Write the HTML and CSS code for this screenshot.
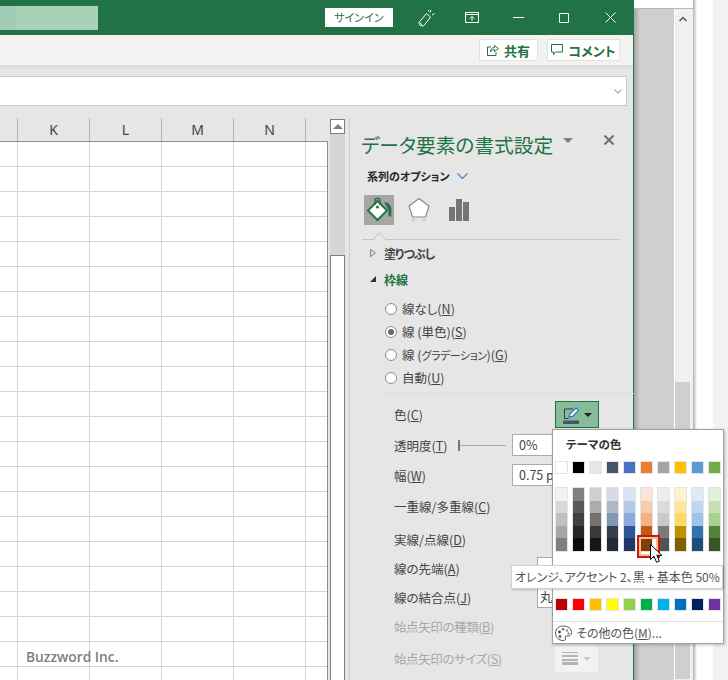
FILE: index.html
```html
<!DOCTYPE html>
<html lang="ja">
<head>
    <meta charset="UTF-8">
    <meta name="viewport" content="width=device-width, initial-scale=1.0">
    <title>データ要素の書式設定</title>
    <link rel="stylesheet" href="styles.css">
</head>
<body>
<div class="screen">
    <div class="excel">
        <div class="titlebar">
            <div class="search-box"></div>
            <button class="signin">サインイン</button>
            <div class="win-btn">
                <svg width="18" height="18" viewBox="0 0 18 18" fill="none" stroke="#fff" stroke-width="1"><path d="M2 13.500 9.500 4.500l4 3.500-6.500 8.500c-1 .8-2.500.5-4-.5-1-1-1.300-1.700-1-2.500zM5 16.500l-2-3M13 3.500l1-2.500M15 6l2.500-1.500M11.500 2.500l.5-1.500"/></svg>
            </div>
            <div class="win-btn">
                <svg width="14" height="11" viewBox="0 0 14 11" fill="none" stroke="#fff"><path d="M.5.5h13v10H.5zM.5 2.500h13M7 9V4.500M5 6.500l2-2 2 2"/></svg>
            </div>
            <div class="win-btn">
                <svg width="11" height="11" viewBox="0 0 11 11" stroke="#fff"><path d="M0 5.500h11"/></svg>
            </div>
            <div class="win-btn">
                <svg width="10" height="10" viewBox="0 0 10 10" fill="none" stroke="#fff"><path d="M.5.5h9v9h-9z"/></svg>
            </div>
            <div class="win-btn">
                <svg width="11" height="11" viewBox="0 0 11 11" stroke="#fff"><path d="M.5.5l10 10M10.500.5l-10 10"/></svg>
            </div>
        </div>

        <div class="toolbar">
            <button class="tool-btn share-btn">
                <svg width="12" height="12" viewBox="0 0 12 12" fill="none" stroke="#217346"><path d="M4 3H.5v8.500h8.500V8M3.500 8c0-3 1.500-4.500 4-4.500V1.500l4 3-4 3V5.500C6 5.500 4.500 6.200 3.500 8z"/></svg>
                共有
            </button>
            <button class="tool-btn comment-btn">
                <svg width="12" height="12" viewBox="0 0 12 12" fill="none" stroke="#217346"><path d="M.5.5h11v7.500H4.500l-2 2.500V8H.5z"/></svg>
                コメント
            </button>
        </div>

        <div class="formula">
            <div class="formula-input">
                <svg width="8" height="5" viewBox="0 0 8 5" fill="none" stroke="#b5b5b5" stroke-width="1.500"><path d="M.5.5 4 4 7.500.5"/></svg>
            </div>
        </div>

        <div class="workspace">
            <div class="sheet">
                <div class="col-heads">
                    <div class="col-head col-first"></div>
                    <div class="col-head">K</div>
                    <div class="col-head">L</div>
                    <div class="col-head">M</div>
                    <div class="col-head">N</div>
                    <div class="col-head col-last"></div>
                </div>
                <div class="cells">
                    <span class="watermark">Buzzword Inc.</span>
                </div>
            </div>

            <div class="vscroll">
                <div class="vscroll-up"><span class="tri-up"></span></div>
                <div class="vscroll-track"></div>
                <div class="vscroll-thumb"></div>
            </div>

            <div class="pane">
                <div class="pane-title">
                    <span class="pane-title-text">データ要素の書式設定</span>
                    <span class="tri-down pane-menu"></span>
                    <svg class="pane-close" width="10" height="10" viewBox="0 0 10 10" stroke="#707070" stroke-width="2"><path d="M.5.5l9 9M9.500.5l-9 9"/></svg>
                </div>
                <div class="series">
                    <span>系列のオプション</span>
                    <svg width="11" height="6" viewBox="0 0 11 6" fill="none" stroke="#3d8ad0" stroke-width="1.200"><path d="M.5.5l5 5 5-5"/></svg>
                </div>

                <div class="tabs">
                    <div class="tab tab-active">
                        <svg width="30" height="30" viewBox="0 0 30 30" fill="none">
                            <path d="M20 7c5 0 8 4 7.500 9l-.5 6-2.500-1V15z" fill="#217346"/>
                            <path d="M13.500 6 23 15.500 13.500 25 4 15.500z" fill="#fff" stroke="#217346" stroke-width="2"/>
                            <path d="M11 10V5c0-2.500 5-2.500 5 0v5" stroke="#217346" stroke-width="1.500"/>
                            <circle cx="13.500" cy="12" r="1.500" fill="#217346"/>
                        </svg>
                    </div>
                    <div class="tab">
                        <svg width="24" height="26" viewBox="0 0 24 26" fill="none">
                            <path d="M12 1.500 22 9l-3.500 11h-13L2 9z" fill="#fff" stroke="#8a8a8a" stroke-width="1.200"/>
                            <path d="M5 23h3M16 23h3" stroke="#b0b0b0"/>
                        </svg>
                    </div>
                    <div class="tab">
                        <svg width="20" height="22" viewBox="0 0 20 22" fill="#757575"><path d="M0 8h6v14H0zM7 0h6v22H7zM14 3h6v19h-6z"/></svg>
                    </div>
                </div>

                <div class="tab-rule"><span class="tab-notch"></span></div>

                <div class="section">
                    <span class="section-arrow tri-right"></span>
                    <span class="tight">塗りつぶし</span>
                </div>
                <div class="section section-open">
                    <span class="section-arrow tri-open"></span>
                    <span>枠線</span>
                </div>

                <div class="radios">
                    <div class="radio-row"><span class="radio"></span><span>線なし(<u>N</u>)</span></div>
                    <div class="radio-row"><span class="radio radio-on"></span><span>線 (単色)(<u>S</u>)</span></div>
                    <div class="radio-row"><span class="radio"></span><span>線 (<span class="kana-small">グラデーション</span>)(<u>G</u>)</span></div>
                    <div class="radio-row"><span class="radio"></span><span>自動(<u>U</u>)</span></div>
                </div>
                <div class="radios-rule"></div>

                <div class="fields">
                    <div class="field field-tall">
                        <label class="field-label">色(<u>C</u>)</label>
                        <button class="color-btn">
                            <svg width="18" height="18" viewBox="0 0 18 18" fill="none">
                                <path d="M10 3H1.500v9.500h4" stroke="#3a3a3a"/>
                                <path d="M6 11l1-3 6-6 2.500 2.500-6 6z" fill="#fff" stroke="#2b79c2" stroke-width="1.300"/>
                                <path d="M0 14.500h16V18H0z" fill="#44546a"/>
                            </svg>
                            <span class="tri-down tri-black"></span>
                        </button>
                    </div>
                    <div class="field">
                        <label class="field-label field-short">透明度(<u>T</u>)</label>
                        <div class="slider"></div>
                        <div class="text-box">0%</div>
                    </div>
                    <div class="field">
                        <label class="field-label">幅(<u>W</u>)</label>
                        <div class="text-box">0.75 pt</div>
                    </div>
                    <div class="field"><label class="field-label">一重線/多重線(<u>C</u>)</label></div>
                    <div class="field"><label class="field-label">実線/点線(<u>D</u>)</label></div>
                    <div class="field">
                        <label class="field-label field-wide">線の先端(<u>A</u>)</label>
                        <div class="text-box text-box-cap"></div>
                    </div>
                    <div class="field">
                        <label class="field-label field-wide">線の結合点(<u>J</u>)</label>
                        <div class="text-box text-box-cap">丸</div>
                    </div>
                    <div class="field field-off"><label class="field-label">始点矢印の種類(<u>B</u>)</label></div>
                    <div class="field field-off field-tall">
                        <label class="field-label field-mid">始点矢印のサイズ(<u>S</u>)</label>
                        <button class="arrow-btn">
                            <svg width="16" height="13" viewBox="0 0 16 13" fill="#b4b4b4"><path d="M0 0h16v1H0zM0 3h16v2H0zM0 7h16v2H0zM0 10h16v3H0z"/></svg>
                            <span class="tri-down tri-pale"></span>
                        </button>
                    </div>
                </div>
            </div>
        </div>
    </div>

    <div class="backdoc">
        <div class="backdoc-top"></div>
        <div class="backdoc-main">
            <div class="backdoc-gray"></div>
            <div class="backdoc-scroll">
                <svg class="backdoc-up" width="8" height="6" viewBox="0 0 8 6" fill="none" stroke="#555" stroke-width="1.500"><path d="M.5 5 4 1.500 7.500 5"/></svg>
                <div class="backdoc-thumb"></div>
            </div>
        </div>
    </div>
    <div class="backedge"></div>
    <div class="backrest"></div>

    <div class="color-menu">
        <div class="menu-head">テーマの色</div>
        <div class="swatches">
            <i class="swatch c-ffffff"></i><i class="swatch c-000000"></i><i class="swatch c-e7e6e6"></i><i class="swatch c-44546a"></i><i class="swatch c-4472c4"></i><i class="swatch c-ed7d31"></i><i class="swatch c-a5a5a5"></i><i class="swatch c-ffc000"></i><i class="swatch c-5b9bd5"></i><i class="swatch c-70ad47"></i>
        </div>
        <div class="swatches shades">
            <div class="shade"><i class="c-f2f2f2"></i><i class="c-d9d9d9"></i><i class="c-bfbfbf"></i><i class="c-a6a6a6"></i><i class="c-808080"></i></div>
            <div class="shade"><i class="c-808080"></i><i class="c-595959"></i><i class="c-404040"></i><i class="c-262626"></i><i class="c-0d0d0d"></i></div>
            <div class="shade"><i class="c-d0cece"></i><i class="c-afabab"></i><i class="c-767171"></i><i class="c-3b3838"></i><i class="c-181717"></i></div>
            <div class="shade"><i class="c-d6dce5"></i><i class="c-adb9ca"></i><i class="c-8497b0"></i><i class="c-333f50"></i><i class="c-222a35"></i></div>
            <div class="shade"><i class="c-dae3f3"></i><i class="c-b4c7e7"></i><i class="c-8faadc"></i><i class="c-2f5597"></i><i class="c-1f3864"></i></div>
            <div class="shade"><i class="c-fbe5d6"></i><i class="c-f8cbad"></i><i class="c-f4b183"></i><i class="c-c55a11"></i><i class="c-843c0c shade-picked"></i></div>
            <div class="shade"><i class="c-ededed"></i><i class="c-dbdbdb"></i><i class="c-c9c9c9"></i><i class="c-7b7b7b"></i><i class="c-525252"></i></div>
            <div class="shade"><i class="c-fff2cc"></i><i class="c-ffe699"></i><i class="c-ffd966"></i><i class="c-bf9000"></i><i class="c-7f6000"></i></div>
            <div class="shade"><i class="c-deebf7"></i><i class="c-bdd7ee"></i><i class="c-9dc3e6"></i><i class="c-2e75b6"></i><i class="c-1f4e79"></i></div>
            <div class="shade"><i class="c-e2f0d9"></i><i class="c-c5e0b4"></i><i class="c-a9d18e"></i><i class="c-548235"></i><i class="c-385723"></i></div>
        </div>
        <div class="swatches swatches-std">
            <i class="swatch c-c00000"></i><i class="swatch c-ff0000"></i><i class="swatch c-ffc000"></i><i class="swatch c-ffff00"></i><i class="swatch c-92d050"></i><i class="swatch c-00b050"></i><i class="swatch c-00b0f0"></i><i class="swatch c-0070c0"></i><i class="swatch c-002060"></i><i class="swatch c-7030a0"></i>
        </div>
        <div class="menu-more">
            <svg width="17" height="16" viewBox="0 0 17 16">
                <path d="M8.500 1C13 1 16.500 3.800 16.500 7.500c0 3-2.500 3.800-4.500 3.500-1.500-.2-2 .8-1.500 2 .5 1.500-.5 2.500-2.500 2.500C4 15.500.5 12.500.5 8S4 1 8.500 1z" fill="#fff" stroke="#555"/>
                <circle cx="4.500" cy="7" r="1.400" fill="#444"/>
                <circle cx="8" cy="4.200" r="1.300" fill="#c0504d"/>
                <circle cx="12" cy="5.500" r="1.200" fill="#70ad47"/>
                <circle cx="13.500" cy="8.500" r="1.100" fill="#4472c4"/>
                <circle cx="5" cy="11.500" r="1.400" fill="#666"/>
            </svg>
            <span>その他の色(<u>M</u>)...</span>
        </div>
    </div>

    <div class="tooltip">オレンジ、アクセント 2、黒 + 基本色 50%</div>

    <svg class="cursor" width="13" height="20" viewBox="0 0 13 20"><path d="M.5.5v15l3.500-3.200 2.500 6 2.800-1.200-2.500-5.800h5z" fill="#fff" stroke="#000"/></svg>
</div>
</body>
</html>
```

FILE: styles.css
```css
* {
    box-sizing: border-box;
}
body {
    margin: 0;
    font-family: "Noto Sans CJK JP", "Noto Sans", sans-serif;
    font-feature-settings: "palt";
    color: #444;
    background: #f2f2f2;
}
button {
    font: inherit;
    padding: 0;
}
i {
    display: block;
}
.screen {
    position: relative;
    display: flex;
    width: 728px;
    height: 680px;
    overflow: hidden;
}

/* excel window */
.excel {
    display: flex;
    flex-direction: column;
    flex: none;
    width: 634px;
    height: 680px;
    background: #e6e6e6;
    border-right: 1px solid #217346;
}
.titlebar {
    display: flex;
    align-items: center;
    flex: none;
    height: 35px;
    background: #217346;
}
.search-box {
    width: 98px;
    height: 24px;
    margin-top: 1px;
    background: linear-gradient(to right, #a0ccb3 16px, #a8d1b8 16px);
}
.signin {
    width: 68px;
    height: 19px;
    margin-left: 227px;
    margin-right: 10px;
    border: none;
    background: #fff;
    color: #217346;
    font-size: 11px;
    line-height: 19px;
}
.win-btn {
    display: flex;
    align-items: center;
    justify-content: center;
    width: 46px;
    height: 35px;
}
.toolbar {
    display: flex;
    justify-content: flex-end;
    gap: 9px;
    flex: none;
    height: 30px;
    padding: 4px 13px 0 0;
    background: #f3f2f1;
}
.tool-btn {
    display: flex;
    align-items: center;
    justify-content: center;
    gap: 5px;
    height: 22px;
    border: 1px solid #e4e2e0;
    background: #fff;
    color: #217346;
    font-size: 13px;
    font-weight: 700;
}
.share-btn {
    width: 59px;
}
.comment-btn {
    width: 73px;
}
.formula {
    flex: none;
    height: 53px;
    padding-top: 11px;
    background: linear-gradient(to bottom, #d9d9d9, #e6e6e6 6px);
}
.formula-input {
    display: flex;
    align-items: center;
    justify-content: flex-end;
    width: 627px;
    height: 30px;
    padding-right: 4px;
    background: #fff;
    border: 1px solid #c8c8c8;
    border-left: none;
}
.workspace {
    display: flex;
    flex: 1;
    min-height: 0;
}

/* sheet */
.sheet {
    display: flex;
    flex-direction: column;
    flex: none;
    width: 330px;
}
.col-heads {
    display: flex;
    flex: none;
    height: 23px;
    padding-right: 2px;
}
.col-head {
    width: 72px;
    border-right: 1px solid #b4b4b4;
    font-family: "Noto Sans", sans-serif;
    font-size: 14px;
    line-height: 23px;
    text-align: center;
}
.col-first {
    width: 18px;
}
.col-last {
    width: 22px;
    border-right: none;
}
.cells {
    position: relative;
    flex: 1;
    width: 328px;
    background-color: #fff;
    background-image:
        linear-gradient(to right, #d4d4d4 1px, transparent 1px),
        linear-gradient(to bottom, #d4d4d4 1px, transparent 1px);
    background-size: 72px 25px;
    background-position: 17px 24px;
    border-top: 1px solid #8e8e8e;
    border-right: 1px solid #8e8e8e;
}
.watermark {
    position: absolute;
    left: 26px;
    top: 505px;
    color: #808080;
    font-family: "Open Sans", sans-serif;
    font-size: 13.800px;
    font-weight: 600;
    line-height: 20px;
}
.vscroll {
    display: flex;
    flex-direction: column;
    flex: none;
    width: 15px;
    padding-top: 1px;
}
.vscroll-up {
    display: flex;
    align-items: center;
    justify-content: center;
    height: 15px;
    background: #fff;
    border: 1px solid #7f7f7f;
}
.vscroll-track {
    height: 121px;
    background: #d6d6d6;
}
.vscroll-thumb {
    flex: 1;
    background: #fff;
    border: 1px solid #7f7f7f;
    border-bottom: none;
}

/* triangles */
.tri-up {
    border-left: 5px solid transparent;
    border-right: 5px solid transparent;
    border-bottom: 5px solid #7f7f7f;
}
.tri-down {
    display: block;
    border-left: 5px solid transparent;
    border-right: 5px solid transparent;
    border-top: 5px solid #7f7f7f;
}
.tri-black {
    border-left-width: 4px;
    border-right-width: 4px;
    border-top: 4px solid #222;
}
.tri-pale {
    border-left-width: 4px;
    border-right-width: 4px;
    border-top: 4px solid #c8c8c8;
}
.tri-right {
    width: 6px;
    height: 9px;
    background: #8a8a8a;
    clip-path: polygon(0 0, 100% 50%, 0 100%, 0 0, 1px 2px, 1px 7px, 4.500px 50%, 1px 2px);
}
.tri-open {
    width: 6px;
    height: 6px;
    background: #333;
    clip-path: polygon(100% 0, 100% 100%, 0 100%);
}

/* format pane */
.pane {
    flex: none;
    width: 285px;
    margin-left: 4px;
    padding-left: 11px;
    border-left: 1px solid #cdcdcd;
}
.pane-title {
    display: flex;
    align-items: center;
    height: 28px;
    margin-top: 12px;
    padding-right: 20px;
}
.pane-title-text {
    width: 202px;
    color: #217346;
    font-size: 19.700px;
    white-space: nowrap;
}
.pane-menu {
    margin-top: -7px;
}
.pane-close {
    margin-left: auto;
    margin-top: -8px;
}
.series {
    display: flex;
    align-items: center;
    gap: 7px;
    height: 18px;
    margin-top: 9px;
    margin-left: 6px;
    color: #262626;
    font-size: 11px;
    font-weight: 700;
}
.tabs {
    display: flex;
    gap: 10px;
    height: 30px;
    margin-top: 10px;
    margin-left: 3px;
}
.tab {
    display: flex;
    align-items: center;
    justify-content: center;
    width: 30px;
    height: 30px;
}
.tab-active {
    background: #a6a6a6;
}
.tab-rule {
    position: relative;
    width: 257px;
    height: 1px;
    margin-top: 14px;
    margin-left: 1px;
    background: #c6c6c6;
}
.tab-notch {
    position: absolute;
    left: 13px;
    top: -5px;
    width: 9px;
    height: 9px;
    background: #e6e6e6;
    border-left: 1px solid #c6c6c6;
    border-top: 1px solid #c6c6c6;
    transform: rotate(45deg);
}
.section {
    display: flex;
    align-items: center;
    height: 26px;
    padding-left: 9px;
    font-size: 12px;
    font-weight: 700;
}
.section:first-of-type {
    margin-top: 1px;
}
.section-arrow {
    flex: none;
    margin-right: 8px;
}
.section-open {
    color: #217346;
}
.tight {
    letter-spacing: -1px;
}
.radios {
    margin-top: 5px;
    padding-left: 24px;
}
.radio-row {
    display: flex;
    align-items: center;
    gap: 5px;
    height: 23px;
    font-size: 12.500px;
}
.kana-small {
    font-size: 11px;
    letter-spacing: -0.500px;
}
.radio {
    display: flex;
    align-items: center;
    justify-content: center;
    width: 12px;
    height: 12px;
    background: #fff;
    border: 1px solid #8c8c8c;
    border-radius: 50%;
}
.radio-on::before {
    content: "";
    width: 6px;
    height: 6px;
    background: #666;
    border-radius: 50%;
}
.radios-rule {
    height: 1px;
    margin: 4px 0 7px 24px;
    background: #dedede;
}
.fields {
    display: grid;
    grid-template-rows: 33px 30px 31px 33px 29px 29px 29px 30px 34px;
    padding-left: 33px;
}
.field {
    display: flex;
    align-items: center;
    height: 22px;
    font-size: 12.500px;
}
.field-tall {
    height: 27px;
}
.field-off {
    color: #a6a6a6;
    letter-spacing: -0.400px;
}
.field-label {
    flex: none;
    width: 118px;
}
.field-short {
    width: 64px;
}
.field-wide {
    width: 143px;
}
.field-mid {
    width: 161px;
}
.color-btn {
    width: 44px;
    height: 27px;
    margin-left: 43px;
    display: flex;
    align-items: center;
    justify-content: center;
    gap: 3px;
    background: #86bc9a;
    border: 1px solid #217346;
}
.slider {
    position: relative;
    width: 48px;
    height: 1px;
    margin-right: 6px;
    background: #a8a8a8;
}
.slider::before {
    content: "";
    position: absolute;
    left: 0;
    top: -5px;
    width: 2px;
    height: 11px;
    background: #777;
}
.text-box {
    width: 88px;
    height: 22px;
    padding-left: 6px;
    background: #fff;
    border: 1px solid #ababab;
    font-size: 12.500px;
    line-height: 20px;
}
.text-box-cap {
    width: 62px;
    padding-left: 2px;
}
.arrow-btn {
    display: flex;
    align-items: center;
    justify-content: center;
    gap: 5px;
    width: 43px;
    height: 26px;
    background: #f2f2f2;
    border: none;
}

/* window behind */
.backdoc {
    display: flex;
    flex-direction: column;
    flex: none;
    width: 59px;
    height: 680px;
}
.backdoc-top {
    flex: none;
    height: 9px;
    background: #fff;
    border-bottom: 1px solid #b8b8b8;
}
.backdoc-main {
    display: flex;
    flex: 1;
}
.backdoc-gray {
    width: 41px;
    background: linear-gradient(to right, #a2a2a2, #cfcfcf 6px);
    border-right: 1px solid #fff;
}
.backdoc-scroll {
    position: relative;
    flex: 1;
    padding-top: 373px;
    background: #f0f0f0;
}
.backdoc-up {
    position: absolute;
    left: 4px;
    top: 7px;
}
.backdoc-thumb {
    width: 15px;
    height: 297px;
    background: #cfcfcf;
}
.backedge {
    flex: none;
    width: 20px;
    height: 680px;
    background: linear-gradient(to right, #b0b0b0, #fff 4px);
}
.backrest {
    flex: 1;
    background: #f2f2f2;
}

/* colour dropdown */
.color-menu {
    position: absolute;
    left: 552px;
    top: 429px;
    width: 172px;
    height: 215px;
    background: #fff;
    border: 1px solid #a0a0a0;
    box-shadow: 1px 1px 3px rgba(0, 0, 0, 0.25);
}
.menu-head {
    height: 20px;
    margin-top: 4px;
    margin-left: 13px;
    color: #333;
    font-size: 11.500px;
    font-weight: 700;
    line-height: 20px;
}
.swatches {
    display: flex;
    gap: 4px;
    margin-top: 7px;
    margin-left: 2px;
}
.shades {
    margin-top: 13px;
}
.swatches-std {
    margin-top: 46px;
}
.swatch {
    width: 13px;
    height: 13px;
    border: 1px solid #e4e4e4;
}
.shade {
    display: flex;
    flex-direction: column;
    width: 13px;
    height: 65px;
    border: 1px solid #e4e4e4;
}
.shade i {
    flex: 1;
}
.shade-picked {
    position: relative;
}
.shade-picked::after {
    content: "";
    position: absolute;
    left: -4px;
    top: -3px;
    width: 19px;
    height: 19px;
    border: 2px solid #c8161b;
    box-shadow: inset 0 0 0 2px #f8c47c;
}
.menu-more {
    display: flex;
    align-items: center;
    gap: 4px;
    height: 22px;
    margin-top: 10px;
    padding-left: 2px;
    border-top: 1px solid #e2e2e2;
    color: #555;
    font-size: 12px;
}
.tooltip {
    position: absolute;
    left: 511px;
    top: 565px;
    width: 212px;
    height: 24px;
    padding-left: 3px;
    background: #fff;
    border: 1px solid #d0d0d0;
    box-shadow: 1px 1px 2px rgba(0, 0, 0, 0.2);
    color: #555;
    font-size: 12px;
    line-height: 22px;
    white-space: nowrap;
}
.cursor {
    position: absolute;
    left: 650px;
    top: 544px;
}

.c-ffffff { background: #ffffff; }
.c-000000 { background: #000000; }
.c-e7e6e6 { background: #e7e6e6; }
.c-44546a { background: #44546a; }
.c-4472c4 { background: #4472c4; }
.c-ed7d31 { background: #ed7d31; }
.c-a5a5a5 { background: #a5a5a5; }
.c-ffc000 { background: #ffc000; }
.c-5b9bd5 { background: #5b9bd5; }
.c-70ad47 { background: #70ad47; }
.c-f2f2f2 { background: #f2f2f2; }
.c-d9d9d9 { background: #d9d9d9; }
.c-bfbfbf { background: #bfbfbf; }
.c-a6a6a6 { background: #a6a6a6; }
.c-808080 { background: #808080; }
.c-595959 { background: #595959; }
.c-404040 { background: #404040; }
.c-262626 { background: #262626; }
.c-0d0d0d { background: #0d0d0d; }
.c-d0cece { background: #d0cece; }
.c-afabab { background: #afabab; }
.c-767171 { background: #767171; }
.c-3b3838 { background: #3b3838; }
.c-181717 { background: #181717; }
.c-d6dce5 { background: #d6dce5; }
.c-adb9ca { background: #adb9ca; }
.c-8497b0 { background: #8497b0; }
.c-333f50 { background: #333f50; }
.c-222a35 { background: #222a35; }
.c-dae3f3 { background: #dae3f3; }
.c-b4c7e7 { background: #b4c7e7; }
.c-8faadc { background: #8faadc; }
.c-2f5597 { background: #2f5597; }
.c-1f3864 { background: #1f3864; }
.c-fbe5d6 { background: #fbe5d6; }
.c-f8cbad { background: #f8cbad; }
.c-f4b183 { background: #f4b183; }
.c-c55a11 { background: #c55a11; }
.c-843c0c { background: #843c0c; }
.c-ededed { background: #ededed; }
.c-dbdbdb { background: #dbdbdb; }
.c-c9c9c9 { background: #c9c9c9; }
.c-7b7b7b { background: #7b7b7b; }
.c-525252 { background: #525252; }
.c-fff2cc { background: #fff2cc; }
.c-ffe699 { background: #ffe699; }
.c-ffd966 { background: #ffd966; }
.c-bf9000 { background: #bf9000; }
.c-7f6000 { background: #7f6000; }
.c-deebf7 { background: #deebf7; }
.c-bdd7ee { background: #bdd7ee; }
.c-9dc3e6 { background: #9dc3e6; }
.c-2e75b6 { background: #2e75b6; }
.c-1f4e79 { background: #1f4e79; }
.c-e2f0d9 { background: #e2f0d9; }
.c-c5e0b4 { background: #c5e0b4; }
.c-a9d18e { background: #a9d18e; }
.c-548235 { background: #548235; }
.c-385723 { background: #385723; }
.c-c00000 { background: #c00000; }
.c-ff0000 { background: #ff0000; }
.c-ffff00 { background: #ffff00; }
.c-92d050 { background: #92d050; }
.c-00b050 { background: #00b050; }
.c-00b0f0 { background: #00b0f0; }
.c-0070c0 { background: #0070c0; }
.c-002060 { background: #002060; }
.c-7030a0 { background: #7030a0; }
```
